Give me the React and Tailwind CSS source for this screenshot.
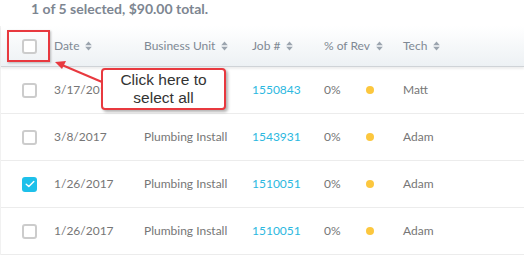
import React from "react";

const rows = [
  { date: "3/17/2017", unit: "", job: "1550843", rev: "0%", tech: "Matt", checked: false },
  { date: "3/8/2017", unit: "Plumbing Install", job: "1543931", rev: "0%", tech: "Adam", checked: false },
  { date: "1/26/2017", unit: "Plumbing Install", job: "1510051", rev: "0%", tech: "Adam", checked: true },
  { date: "1/26/2017", unit: "Plumbing Install", job: "1510051", rev: "0%", tech: "Adam", checked: false },
];

const cols = "grid grid-cols-[53px_90px_108px_72px_41px_38px_1fr] items-center";

function SortIcon() {
  return (
    <svg width="7" height="10" viewBox="0 0 7 10" className="ml-[6px] shrink-0">
      <path d="M3.5 0.5 L6.8 4.2 L0.2 4.2 Z" fill="#9ba4ae" />
      <path d="M3.5 9.5 L6.8 5.8 L0.2 5.8 Z" fill="#9ba4ae" />
    </svg>
  );
}

function Checkbox({ checked }) {
  if (checked) {
    return (
      <div className="ml-[21px] flex h-[15px] w-[15px] items-center justify-center rounded-[3px] bg-[#1ec0ea]">
        <svg width="10" height="8" viewBox="0 0 10 8">
          <path d="M1.2 4.2 L3.8 6.6 L8.8 1.4" fill="none" stroke="white" strokeWidth="1.4" strokeLinecap="round" strokeLinejoin="round" />
        </svg>
      </div>
    );
  }
  return <div className="ml-[21px] h-[15px] w-[15px] rounded-[3px] border-2 border-[#cccccc] bg-white" />;
}

function HeaderCell({ label }) {
  return (
    <div className="flex items-center">
      <span>{label}</span>
      <SortIcon />
    </div>
  );
}

export default function App() {
  return (
    <div className="relative h-[255px] w-[524px] overflow-hidden bg-white font-['Lato',sans-serif]">
      <div className="h-[26px] pl-[31px] text-[14px] font-bold leading-[17px] text-[#7d8691]">
        1 of 5 selected, $90.00 total.
      </div>

      <div className="border-l border-[#f1f1f1]">
        <div
          className={`${cols} h-[41px] border-b border-[#cfd3d7] bg-gradient-to-b from-white to-[#edf1f4] text-[12px] text-[#7f8994] shadow-[0_2px_2px_rgba(0,0,0,0.07)]`}
        >
          <Checkbox checked={false} />
          <HeaderCell label="Date" />
          <HeaderCell label="Business Unit" />
          <HeaderCell label="Job #" />
          <div className="col-span-2 flex items-center">
            <span>% of Rev</span>
            <SortIcon />
          </div>
          <HeaderCell label="Tech" />
        </div>

        {rows.map((r, i) => (
          <div
            key={i}
            className={`${cols} h-[47px] border-b border-[#ececec] text-[12px] text-[#767676]`}
          >
            <Checkbox checked={r.checked} />
            <div>{r.date}</div>
            <div>{r.unit}</div>
            <div className="text-[#2cb8e0]">{r.job}</div>
            <div>{r.rev}</div>
            <div className="pl-[1px]">
              <div className="h-[8px] w-[8px] rounded-full bg-[#fcc73e]" />
            </div>
            <div>{r.tech}</div>
          </div>
        ))}
      </div>

      {/* highlight around the select-all checkbox */}
      <div className="absolute left-[7px] top-[30px] h-[32px] w-[43px] border-2 border-[#e8393f] shadow-[1px_1px_2px_rgba(0,0,0,0.25)]" />

      {/* pointer arrow */}
      <svg className="absolute left-0 top-0" width="524" height="255" viewBox="0 0 524 255">
        <line x1="102" y1="82" x2="62" y2="65" stroke="#e8393f" strokeWidth="2" />
        <path d="M55 62 L66 61 L62 69 Z" fill="#e8393f" />
      </svg>

      {/* callout */}
      <div className="absolute left-[101px] top-[68px] flex h-[42px] w-[125px] flex-col items-center justify-center rounded-[4px] border-2 border-[#e8393f] bg-white font-['Liberation_Sans',Arial,sans-serif] text-[15.5px] leading-[18px] text-[#333333] shadow-[2px_2px_3px_rgba(0,0,0,0.3)]">
        <span>Click here to</span>
        <span>select all</span>
      </div>
    </div>
  );
}
